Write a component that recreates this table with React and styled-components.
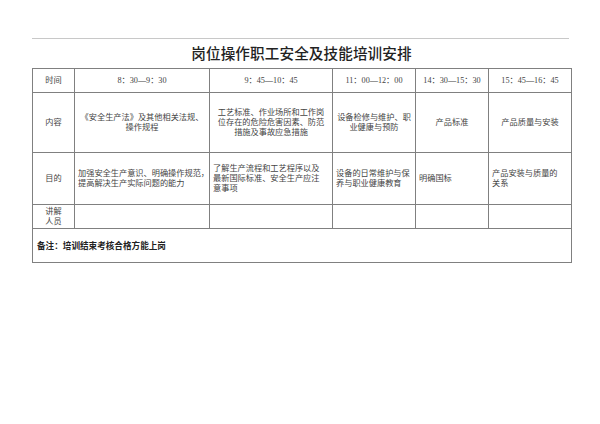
import React from 'react';
import styled, { createGlobalStyle } from 'styled-components';

const GlobalStyle = createGlobalStyle`
  html, body {
    margin: 0;
    padding: 0;
    background: #fff;
  }
  body {
    font-family: "Liberation Serif", "Noto Sans CJK SC", serif;
  }
`;

const Page = styled.div`
  width: 600px;
  height: 424px;
  padding: 38px 29px 0 32px;
  box-sizing: border-box;
`;

const Rule = styled.div`
  height: 1px;
  background: #c8c8c8;
  margin-right: 2px;
`;

const Title = styled.h1`
  margin: 0;
  height: 29px;
  line-height: 28px;
  text-align: center;
  font-family: "Noto Sans CJK SC", sans-serif;
  font-weight: 500;
  font-size: 14.6px;
  color: #222;
  letter-spacing: 0.1px;
`;

const Table = styled.table`
  width: 539px;
  border-collapse: collapse;
  table-layout: fixed;
  font-family: "Liberation Serif", "Noto Sans CJK SC", serif;
  font-size: 8.2px;
  color: #444;
`;

const Row = styled.tr`
  height: ${p => p.$h}px;
`;

const Cell = styled.td`
  border: 1px solid #808080;
  padding: 0 ${p => (p.$left ? '3px' : '2px')};
  text-align: ${p => (p.$left ? 'left' : 'center')};
  vertical-align: middle;
  line-height: 10px;
  white-space: nowrap;
`;

const NoteCell = styled(Cell)`
  text-align: left;
  padding-left: 4px;
  font-weight: bold;
  font-size: 8.6px;
  color: #222;
`;

const widths = [42, 135, 123, 83, 73, 83];

const times = ['8：30—9：30', '9：45—10：45', '11：00—12：00', '14：30—15：30', '15：45—16：45'];

const contents = [
  ['《安全生产法》及其他相关法规、', '操作规程'],
  ['工艺标准、作业场所和工作岗', '位存在的危险危害因素、防范', '措施及事故应急措施'],
  ['设备检修与维护、职', '业健康与预防'],
  ['产品标准'],
  ['产品质量与安装'],
];

const goals = [
  ['加强安全生产意识、明确操作规范，', '提高解决生产实际问题的能力'],
  ['了解生产流程和工艺程序以及', '最新国际标准、安全生产应注', '意事项'],
  ['设备的日常维护与保', '养与职业健康教育'],
  ['明确国标'],
  ['产品安装与质量的', '关系'],
];

function Lines({ lines }) {
  return lines.map((l, i) => (
    <React.Fragment key={i}>
      {i > 0 && <br />}
      {l}
    </React.Fragment>
  ));
}

export default function App() {
  return (
    <Page>
      <GlobalStyle />
      <Rule />
      <Title>岗位操作职工安全及技能培训安排</Title>
      <Table>
        <colgroup>
          {widths.map((w, i) => (
            <col key={i} style={{ width: w }} />
          ))}
        </colgroup>
        <tbody>
          <Row $h={24}>
            <Cell>时间</Cell>
            {times.map(t => (
              <Cell key={t}>{t}</Cell>
            ))}
          </Row>
          <Row $h={60}>
            <Cell>内容</Cell>
            {contents.map((c, i) => (
              <Cell key={i}>
                <Lines lines={c} />
              </Cell>
            ))}
          </Row>
          <Row $h={52}>
            <Cell>目的</Cell>
            {goals.map((g, i) => (
              <Cell key={i} $left>
                <Lines lines={g} />
              </Cell>
            ))}
          </Row>
          <Row $h={24}>
            <Cell>讲解<br />人员</Cell>
            {times.map(t => (
              <Cell key={t} />
            ))}
          </Row>
          <Row $h={34}>
            <NoteCell colSpan={6}>备注：培训结束考核合格方能上岗</NoteCell>
          </Row>
        </tbody>
      </Table>
    </Page>
  );
}
